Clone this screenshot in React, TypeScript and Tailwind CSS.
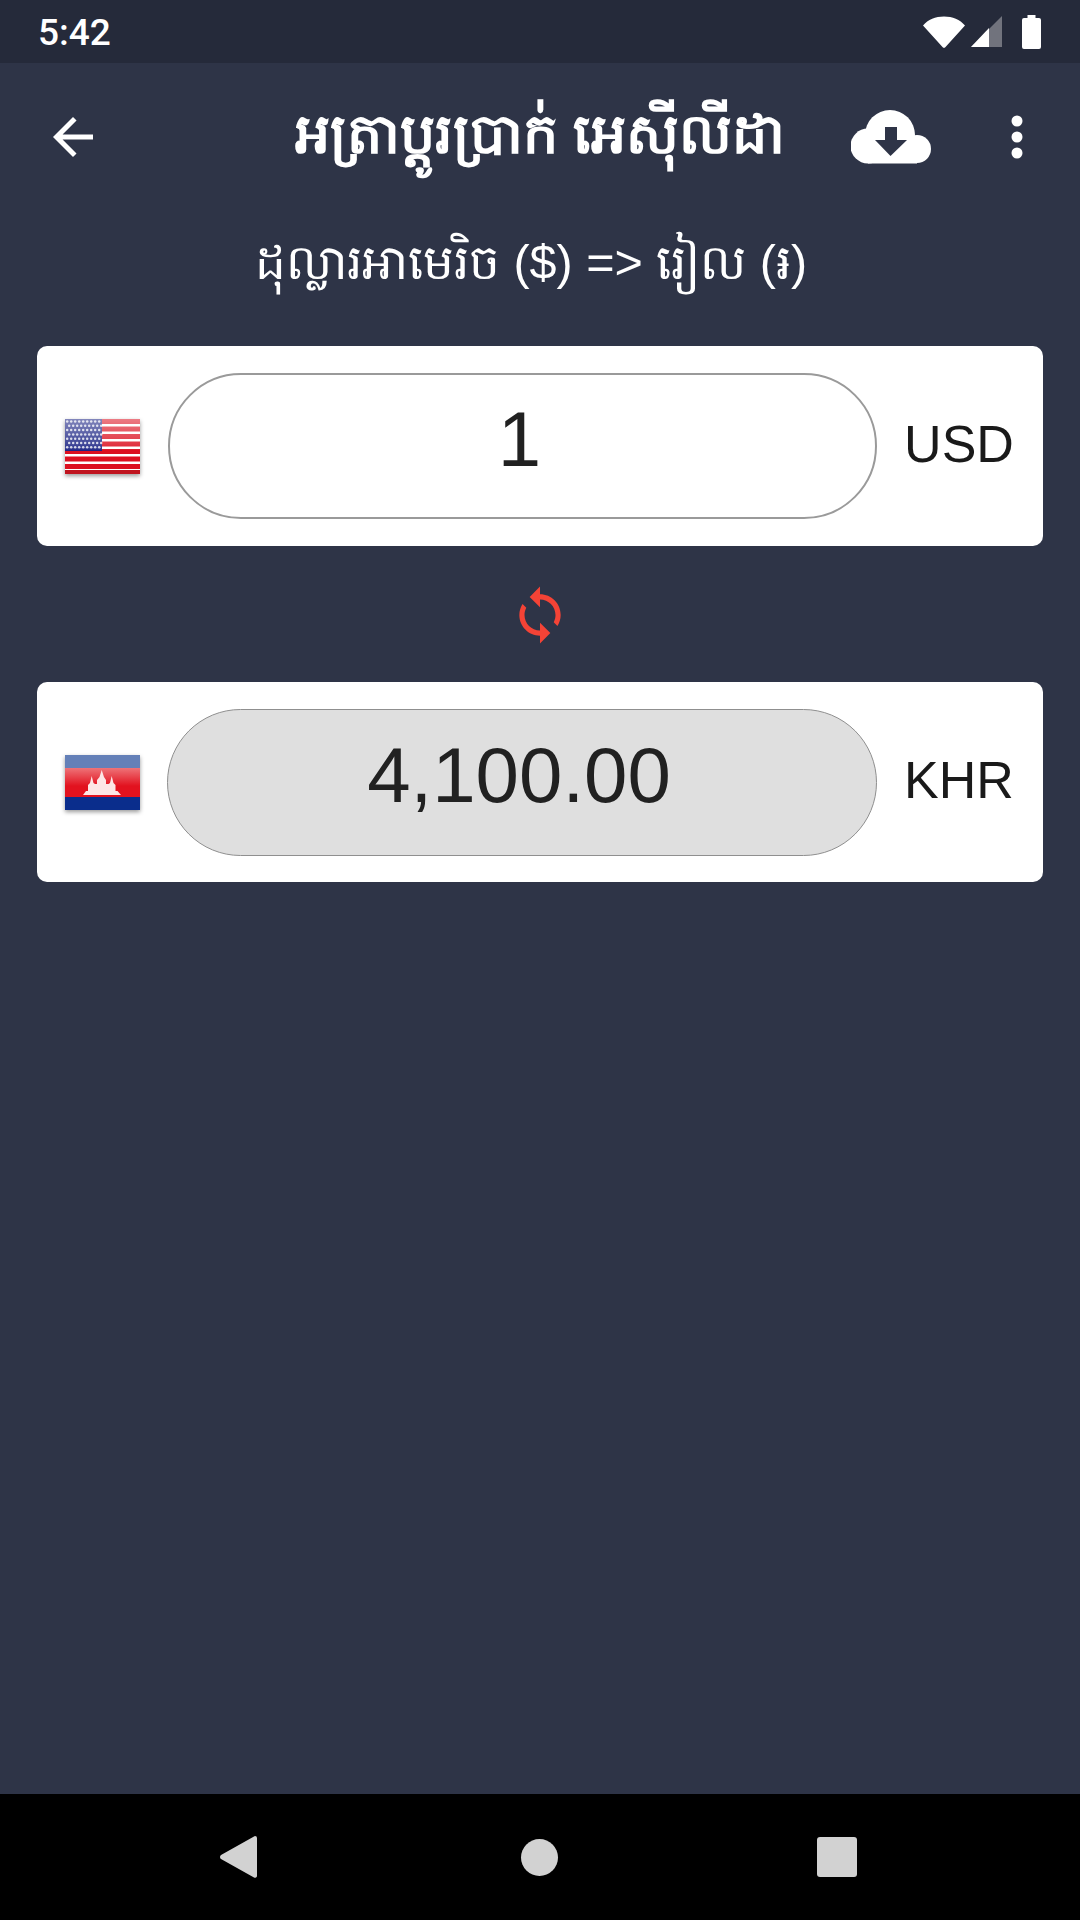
const khmer = "font-['Liberation_Sans','Noto_Sans',sans-serif]";

function UsFlag() {
  const stripes = [0, 1, 2, 3, 4, 5, 6, 7];
  const dots = [];
  for (let r = 0; r < 7; r++) {
    for (let c = 0; c < 9; c++) {
      dots.push(<circle key={`${r}-${c}`} cx={2.2 + c * 4 + (r % 2) * 2} cy={2.5 + r * 4.3} r="1.250" fill="#fff" opacity="0.8" />);
    }
  }
  return (
    <svg width="75" height="55" viewBox="0 0 75 55" className="shrink-0 blur-[0.5px] drop-shadow-[0_2px_2px_rgba(0,0,0,0.4)]">
      <defs>
        <linearGradient id="usGloss" x1="0" y1="0" x2="0" y2="1">
          <stop offset="0" stopColor="#fff" stopOpacity="0.45" />
          <stop offset="0.55" stopColor="#fff" stopOpacity="0.1" />
          <stop offset="0.56" stopColor="#fff" stopOpacity="0" />
        </linearGradient>
      </defs>
      <rect width="75" height="55" fill="#fff" />
      {stripes.map((i) => (
        <rect key={i} y={i * 7.5} width="75" height={i === 7 ? 2.5 : 5} fill="#dc1020" />
      ))}
      <rect y="51" width="75" height="4" fill="#c0141f" />
      <rect width="37" height="32" fill="#1c2484" />
      {dots}
      <rect width="75" height="55" fill="url(#usGloss)" />
    </svg>
  );
}

function KhFlag() {
  return (
    <svg width="75" height="55" viewBox="0 0 75 55" className="shrink-0 blur-[0.5px] drop-shadow-[0_2px_2px_rgba(0,0,0,0.4)]">
      <defs>
        <linearGradient id="khRed" x1="0" y1="0" x2="0" y2="1">
          <stop offset="0" stopColor="#ee7378" />
          <stop offset="0.6" stopColor="#e2121f" />
          <stop offset="1" stopColor="#e2121f" />
        </linearGradient>
      </defs>
      <rect width="75" height="13" fill="#6480b8" />
      <rect y="13" width="75" height="30" fill="url(#khRed)" />
      <rect y="42" width="75" height="13" fill="#0a2d8c" />
      <path
        d="M18 40L21 36H23V30L25 28L26.700 21L28.500 28L30 29H32V25L34.500 22L36.700 15L39 22L41 25V29H43.500L45 28L46.700 21L48.500 28L50.500 30V36H52.500L56 40Z"
        fill="#fde7e7"
      />
    </svg>
  );
}

function CurrencyRow({ flag, value, code, readOnly }: { flag: React.ReactNode; value: string; code: string; readOnly?: boolean }) {
  return (
    <div className="flex h-[200px] items-center rounded-[10px] bg-white pl-7 pr-[29px]">
      {flag}
      <div
        className={
          readOnly
            ? "ml-[27px] flex h-[147px] flex-1 items-center justify-center rounded-full border border-[#8f8f8f] bg-[#dfdfdf] pb-[14px] pr-[6px]"
            : "ml-[28px] flex h-[146px] flex-1 items-center justify-center rounded-full border-[2px] border-[#9a9a9a] bg-white pb-[14px] pr-[6px]"
        }
      >
        <span className="text-[78px] leading-none text-[#212121]">{value}</span>
      </div>
      <span className="mb-[5px] ml-[27px] w-[110px] text-center text-[52px] leading-none text-[#1a1a1a]">{code}</span>
    </div>
  );
}

export default function App() {
  return (
    <div className={`flex h-[1920px] w-[1080px] flex-col overflow-hidden bg-[#2e3447] ${khmer}`}>
      {/* status bar */}
      <div className="flex h-[63px] items-center bg-[#252a3a] pl-[38px] pr-[39px]">
        <span className="pt-[2px] font-['Roboto',sans-serif] text-[37px] font-medium leading-none text-white">5:42</span>
        <svg width="42" height="32" viewBox="0 0 42 32" className="ml-auto">
          <path d="M0 9.500C5 3.500 12.500 0.500 21 0.500S37 3.500 42 9.500L22.500 31a2 2 0 0 1-3 0z" fill="#fff" />
        </svg>
        <svg width="31" height="31" viewBox="0 0 31 31" className="ml-[6px]">
          <path d="M31 0v31H0z" fill="#71737d" />
          <path d="M18 12v19H0z" fill="#fff" />
        </svg>
        <svg width="19" height="34" viewBox="0 0 19 34" className="ml-[20px]">
          <path d="M5.500 0h8v3h3.500a2 2 0 0 1 2 2v27a2 2 0 0 1-2 2H2a2 2 0 0 1-2-2V5a2 2 0 0 1 2-2h3.500z" fill="#fff" />
        </svg>
      </div>

      {/* toolbar */}
      <div className="flex h-[144px] items-center pl-[43px]">
        <svg width="60" height="60" viewBox="0 0 24 24" fill="#fff" className="mt-[3px] shrink-0">
          <path d="M20 11H7.830l5.590-5.590L12 4l-8 8 8 8 1.410-1.410L7.830 13H20v-2z" />
        </svg>
        <h1 className="ml-[192px] w-[520px] text-[55.5px] font-bold leading-none whitespace-nowrap text-white">អត្រាប្តូរប្រាក់ អេស៊ីលីដា</h1>
        <svg width="80" height="54" viewBox="0 0 80 54" className="ml-[36px] mt-[3px] shrink-0">
          <circle cx="39" cy="25" r="25" fill="#fff" />
          <circle cx="17" cy="36" r="17.500" fill="#fff" />
          <circle cx="66" cy="39" r="14" fill="#fff" />
          <rect x="17" y="30" width="49" height="23.500" fill="#fff" />
          <path d="M34 17h12v13h10L39.500 46 24 30h10z" fill="#2e3447" />
        </svg>
        <svg width="12" height="44" viewBox="0 0 12 44" fill="#fff" className="ml-[80px] mt-[3px] shrink-0">
          <circle cx="6" cy="6" r="5.500" />
          <circle cx="6" cy="22" r="5.500" />
          <circle cx="6" cy="38" r="5.500" />
        </svg>
      </div>

      <p className="mt-[3px] pr-[18px] text-center text-[48.5px] leading-[104px] text-white">ដុល្លារអាមេរិច ($) =&gt; រៀល (៛)</p>

      <div className="mt-[32px] flex flex-col px-[37px]">
        <CurrencyRow flag={<UsFlag />} value="1" code="USD" />
        <div className="flex h-[136px] items-center justify-center pt-[2px]">
          <svg width="62" height="62" viewBox="0 0 24 24" fill="#f44336">
            <path d="M12 4V1L8 5l4 4V6c3.310 0 6 2.690 6 6 0 1.010-.25 1.970-.7 2.800l1.460 1.460C19.540 15.030 20 13.570 20 12c0-4.420-3.580-8-8-8zm0 14c-3.310 0-6-2.690-6-6 0-1.010.25-1.970.7-2.800L5.240 7.740C4.460 8.970 4 10.430 4 12c0 4.420 3.580 8 8 8v3l4-4-4-4v3z" />
          </svg>
        </div>
        <CurrencyRow flag={<KhFlag />} value="4,100.00" code="KHR" readOnly />
      </div>

      <div className="flex-1" />

      {/* navigation bar */}
      <div className="flex h-[126px] items-center bg-black pl-[220px] pr-[223px]">
        <svg width="37" height="42" viewBox="0 0 37 42" fill="#d2d2d2">
          <path d="M35 0a2 2 0 0 1 2 2v38a2 2 0 0 1-3 1.500L1 23a2.500 2.500 0 0 1 0-4L34 .5z" />
        </svg>
        <div className="ml-[264px] h-[37px] w-[37px] rounded-full bg-[#d2d2d2]" />
        <div className="ml-auto h-[40px] w-[40px] rounded-[3px] bg-[#d2d2d2]" />
      </div>
    </div>
  );
}
